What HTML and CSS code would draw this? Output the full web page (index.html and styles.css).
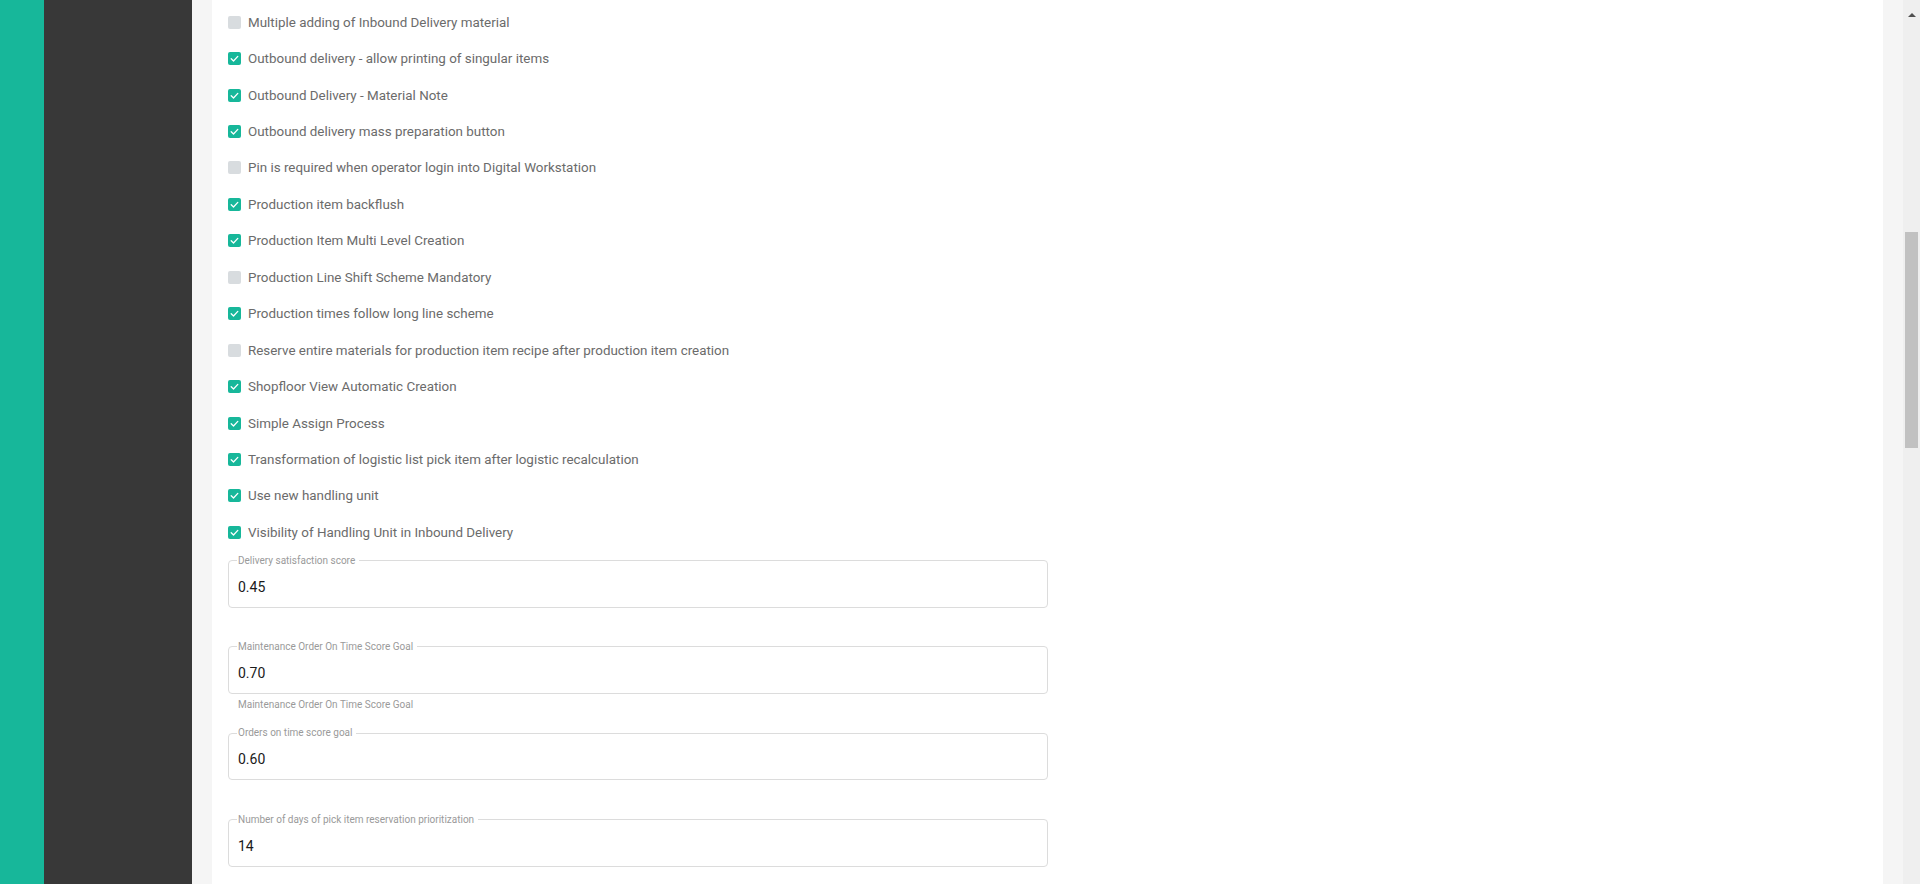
FILE: index.html
```html
<!DOCTYPE html>
<html lang="en">
<head>
    <meta charset="UTF-8">
    <meta name="viewport" content="width=device-width, initial-scale=1.0">
    <title>Settings</title>
    <link rel="stylesheet" href="styles.css">
</head>
<body>
    <div class="layout">
        <div class="rail"></div>
        <div class="sidebar"></div>
        <main class="main">
            <div class="card">
                <ul class="options">
                    <li class="option"><span class="box"></span>Multiple adding of Inbound Delivery material</li>
                    <li class="option is-on"><span class="box"><svg viewBox="0 0 13 13"><path d="M3.2 6.8 L5.5 9 L9.8 4.4"/></svg></span>Outbound delivery - allow printing of singular items</li>
                    <li class="option is-on"><span class="box"><svg viewBox="0 0 13 13"><path d="M3.2 6.8 L5.5 9 L9.8 4.4"/></svg></span>Outbound Delivery - Material Note</li>
                    <li class="option is-on"><span class="box"><svg viewBox="0 0 13 13"><path d="M3.2 6.8 L5.5 9 L9.8 4.4"/></svg></span>Outbound delivery mass preparation button</li>
                    <li class="option"><span class="box"></span>Pin is required when operator login into Digital Workstation</li>
                    <li class="option is-on"><span class="box"><svg viewBox="0 0 13 13"><path d="M3.2 6.8 L5.5 9 L9.8 4.4"/></svg></span>Production item backflush</li>
                    <li class="option is-on"><span class="box"><svg viewBox="0 0 13 13"><path d="M3.2 6.8 L5.5 9 L9.8 4.4"/></svg></span>Production Item Multi Level Creation</li>
                    <li class="option"><span class="box"></span>Production Line Shift Scheme Mandatory</li>
                    <li class="option is-on"><span class="box"><svg viewBox="0 0 13 13"><path d="M3.2 6.8 L5.5 9 L9.8 4.4"/></svg></span>Production times follow long line scheme</li>
                    <li class="option"><span class="box"></span>Reserve entire materials for production item recipe after production item creation</li>
                    <li class="option is-on"><span class="box"><svg viewBox="0 0 13 13"><path d="M3.2 6.8 L5.5 9 L9.8 4.4"/></svg></span>Shopfloor View Automatic Creation</li>
                    <li class="option is-on"><span class="box"><svg viewBox="0 0 13 13"><path d="M3.2 6.8 L5.5 9 L9.8 4.4"/></svg></span>Simple Assign Process</li>
                    <li class="option is-on"><span class="box"><svg viewBox="0 0 13 13"><path d="M3.2 6.8 L5.5 9 L9.8 4.4"/></svg></span>Transformation of logistic list pick item after logistic recalculation</li>
                    <li class="option is-on"><span class="box"><svg viewBox="0 0 13 13"><path d="M3.2 6.8 L5.5 9 L9.8 4.4"/></svg></span>Use new handling unit</li>
                    <li class="option is-on"><span class="box"><svg viewBox="0 0 13 13"><path d="M3.2 6.8 L5.5 9 L9.8 4.4"/></svg></span>Visibility of Handling Unit in Inbound Delivery</li>
                </ul>

                <div class="field">
                    <fieldset class="outline">
                        <legend>Delivery satisfaction score</legend>
                        <input class="value" type="text" value="0.45">
                    </fieldset>
                    <div class="hint"></div>
                </div>
                <div class="field">
                    <fieldset class="outline">
                        <legend>Maintenance Order On Time Score Goal</legend>
                        <input class="value" type="text" value="0.70">
                    </fieldset>
                    <div class="hint">Maintenance Order On Time Score Goal</div>
                </div>
                <div class="field">
                    <fieldset class="outline">
                        <legend>Orders on time score goal</legend>
                        <input class="value" type="text" value="0.60">
                    </fieldset>
                    <div class="hint"></div>
                </div>
                <div class="field">
                    <fieldset class="outline">
                        <legend>Number of days of pick item reservation prioritization</legend>
                        <input class="value" type="text" value="14">
                    </fieldset>
                    <div class="hint"></div>
                </div>
            </div>
        </main>
        <div class="scrollbar">
            <div class="arrow"></div>
            <div class="thumb"></div>
        </div>
    </div>
</body>
</html>
```

FILE: styles.css
```css
html, body {
    margin: 0;
    padding: 0;
    height: 100%;
    overflow: hidden;
}
body {
    font-family: Roboto, 'Liberation Sans', sans-serif;
    color: #6b6b6b;
}
.layout {
    display: flex;
    height: 884px;
}
.rail {
    width: 44px;
    background-color: #17b79a;
}
.sidebar {
    width: 148px;
    background-color: #383838;
}
.main {
    flex: 1;
    background-color: #f5f5f5;
    padding: 0 20px;
    overflow: hidden;
}
.card {
    background-color: #fff;
    height: 100%;
    padding: 4px 16px 0;
}
.options {
    list-style: none;
    margin: 0;
    padding: 0;
}
.option {
    display: flex;
    align-items: center;
    height: 36.45px;
    font-size: 13.4px;
}
.box {
    display: flex;
    width: 13px;
    height: 13px;
    margin-right: 7px;
    border-radius: 2px;
    background-color: #d8dcdf;
}
.is-on .box {
    background-color: #17b79a;
}
.box svg {
    width: 13px;
    height: 13px;
    fill: none;
    stroke: #fff;
    stroke-width: 1.3;
    stroke-linecap: round;
    stroke-linejoin: round;
}
.field {
    width: 820px;
}
.outline {
    margin: 4px 0 0;
    padding: 0 9px;
    border: 1px solid #dcdcdc;
    border-radius: 4px;
    height: 53px;
    box-sizing: border-box;
}
.outline legend {
    font-size: 10px;
    line-height: 12px;
    color: #9a9a9a;
    padding: 0 4px 0 1px;
    margin-left: -1px;
}
.value {
    display: block;
    width: 100%;
    border: none;
    outline: none;
    padding: 0;
    margin-top: 3px;
    height: 34px;
    font-family: Roboto, 'Liberation Sans', sans-serif;
    font-size: 14px;
    color: #1a1a1a;
    background: transparent;
}
.hint {
    height: 29.4px;
    padding: 5px 0 0 10px;
    box-sizing: border-box;
    font-size: 10px;
    line-height: 12px;
    color: #9a9a9a;
}
.scrollbar {
    width: 17px;
    background-color: #efefef;
    display: flex;
    flex-direction: column;
}
.arrow {
    height: 17px;
    display: flex;
    justify-content: center;
    padding-top: 7px;
    box-sizing: border-box;
}
.arrow::before {
    content: "";
    border-left: 4px solid transparent;
    border-right: 4px solid transparent;
    border-bottom: 4px solid #505050;
}
.thumb {
    margin: 215px 2px 0;
    height: 216px;
    background-color: #c1c1c1;
}
```
